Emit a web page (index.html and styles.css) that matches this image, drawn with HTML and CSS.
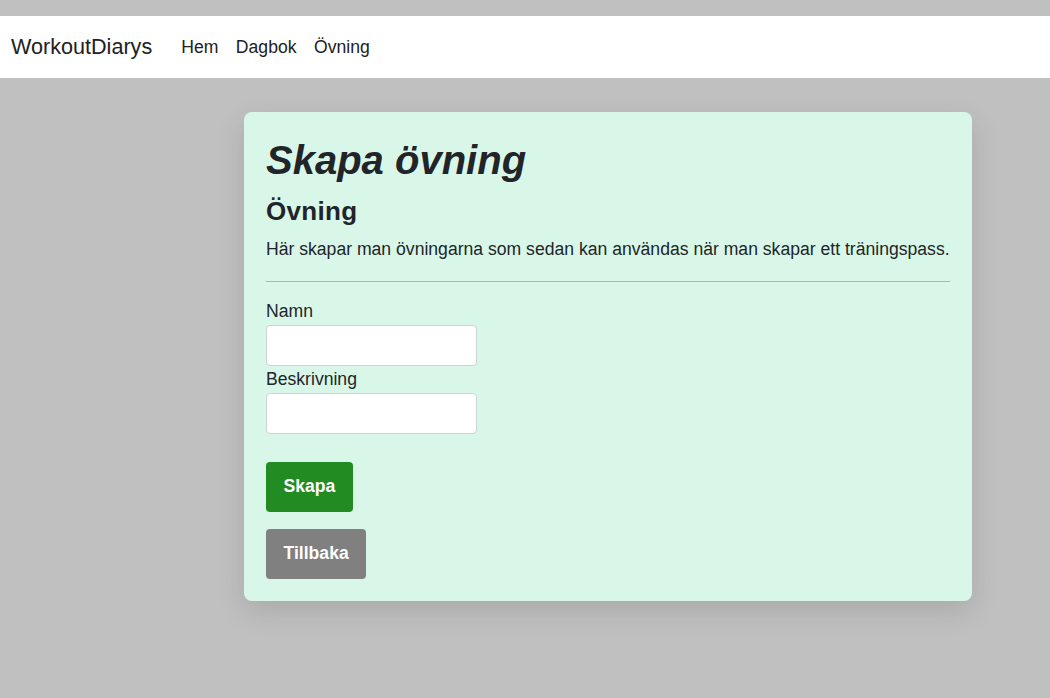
FILE: index.html
```html
<!DOCTYPE html>
<html lang="sv">
<head>
<meta charset="utf-8">
<title>WorkoutDiarys</title>
<link rel="stylesheet" href="styles.css">
</head>
<body>
<div class="page">
  <nav class="navbar">
    <a class="brand" href="#">WorkoutDiarys</a>
    <ul class="nav-links">
      <li><a href="#">Hem</a></li>
      <li><a href="#">Dagbok</a></li>
      <li><a href="#">Övning</a></li>
    </ul>
  </nav>
  <main class="main">
    <section class="card">
      <h1 class="title">Skapa övning</h1>
      <h2 class="subtitle">Övning</h2>
      <p class="lead">Här skapar man övningarna som sedan kan användas när man skapar ett träningspass.</p>
      <hr class="divider">
      <form class="form">
        <label class="label" for="namn">Namn</label>
        <input class="input" id="namn" type="text">
        <label class="label" for="beskrivning">Beskrivning</label>
        <input class="input" id="beskrivning" type="text">
        <div class="actions">
          <button type="button" class="btn btn-green">Skapa</button>
          <button type="button" class="btn btn-grey">Tillbaka</button>
        </div>
      </form>
    </section>
  </main>
</div>
</body>
</html>
```
FILE: styles.css
```css
* { box-sizing: border-box; }
html, body {
  margin: 0;
  padding: 0;
  height: 100%;
}
body {
  background: #c0c0c0;
  font-family: "Liberation Sans", Arial, sans-serif;
  color: #212529;
  font-size: 16px;
  line-height: 1.5;
}
.page {
  padding-top: 16px;
}
.navbar {
  background: #ffffff;
  height: 62px;
  display: flex;
  align-items: center;
  padding-left: 11px;
}
.brand {
  font-size: 21.6px;
  color: #212121;
  text-decoration: none;
  margin-right: 29px;
}
.nav-links {
  list-style: none;
  display: flex;
  gap: 17.5px;
  margin: 0;
  padding: 0;
}
.nav-links a {
  font-size: 17.6px;
  color: #212121;
  text-decoration: none;
}
.main {
  padding-top: 34px;
  padding-left: 244px;
}
.card {
  width: 728px;
  background: #d9f7e8;
  border-radius: 8px;
  padding: 22px;
  box-shadow: 0 10px 30px rgba(0, 0, 0, 0.12);
}
.title {
  font-size: 40px;
  font-weight: 700;
  font-style: italic;
  line-height: 1.2;
  margin: 2px 0 12px;
}
.subtitle {
  font-size: 26px;
  font-weight: 700;
  line-height: 1.2;
  margin: 0 0 9px;
  letter-spacing: 0.3px;
}
.lead {
  margin: 0 0 18px;
  font-size: 17.6px;
}
.divider {
  border: 0;
  border-top: 1px solid #a9b8b0;
  margin: 0 0 17px;
}
.form {
  display: flex;
  flex-direction: column;
  align-items: flex-start;
}
.label {
  font-size: 17.6px;
  line-height: 24px;
  margin-bottom: 2px;
}
.input {
  width: 211px;
  height: 41px;
  margin-bottom: 1px;
  border: 1px solid #ced4da;
  border-radius: 4px;
  background: #fff;
  font-family: inherit;
  font-size: 16px;
}
.actions {
  display: flex;
  flex-direction: column;
  align-items: flex-start;
  gap: 17px;
  margin-top: 27px;
}
.btn {
  border: 0;
  border-radius: 4px;
  padding: 0 17.5px;
  height: 50px;
  color: #fff;
  font-family: inherit;
  font-weight: 700;
  font-size: 17.6px;
  cursor: pointer;
}
.btn-green { background: #228b22; }
.btn-grey { background: #808080; }
```
